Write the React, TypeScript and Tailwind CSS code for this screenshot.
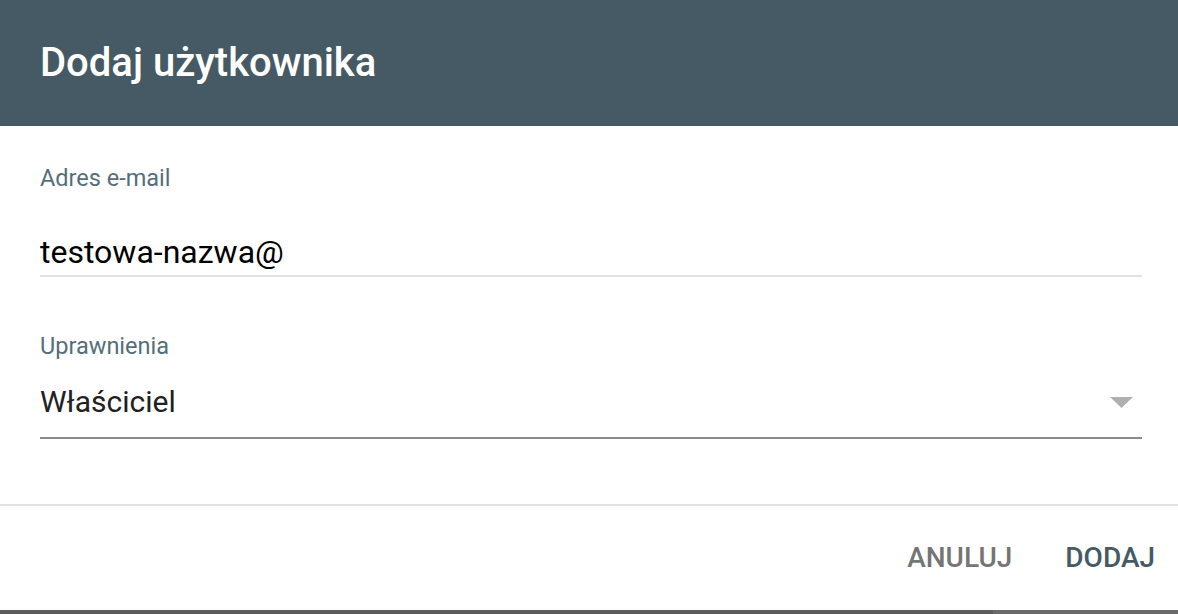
import { useState } from 'react';

export default function App() {
  const [email, setEmail] = useState('testowa-nazwa@');

  return (
    <div className="flex h-[614px] w-[1178px] flex-col overflow-hidden bg-white font-['Roboto',sans-serif]">
      <div className="flex h-[126px] shrink-0 items-center bg-[#455a64] px-10">
        <h1 className="text-[40px] font-medium leading-none text-white">Dodaj użytkownika</h1>
      </div>

      <div className="flex flex-col pl-10 pr-[36px] pt-[38px]">
        <label className="block text-[23.5px] leading-[28px] text-[#546e7a]">Adres e-mail</label>
        <div className="border-b-2 border-[#e0e0e0] pb-[3px] pt-[40px]">
          <input
            value={email}
            onChange={(e) => setEmail(e.target.value)}
            className="block h-[40px] w-full bg-transparent text-[32px] leading-[40px] text-black outline-none"
          />
        </div>

        <label className="mt-[55px] block text-[23.5px] leading-[28px] text-[#546e7a]">Uprawnienia</label>
        <div className="flex items-center justify-between border-b-2 border-[#8a8a8a] pb-[15px] pt-[22px]">
          <span className="text-[30px] leading-[40px] text-[#212121]">Właściciel</span>
          <svg width="23" height="11" viewBox="0 0 23 11" className="mr-[9px]">
            <path d="M0 0h23L11.5 11z" fill="#b0b0b0" />
          </svg>
        </div>
      </div>

      <div className="mt-auto border-t-2 border-[#e3e3e3]">
        <div className="flex h-[104px] items-center justify-end gap-[53px] pr-[23px]">
          <button className="text-[28px] font-medium text-[#757575]">ANULUJ</button>
          <button className="text-[28px] font-medium text-[#455a64]">DODAJ</button>
        </div>
        <div className="flex h-[4px]">
          <div className="w-[993px] bg-[#5c5c5c]" />
          <div className="flex-1 bg-[#6a6a6a]" />
        </div>
      </div>
    </div>
  );
}
